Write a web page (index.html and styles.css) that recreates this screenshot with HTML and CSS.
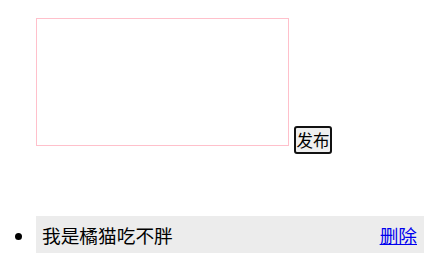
FILE: index.html
```html
<!DOCTYPE html>
<html lang="zh">
<head>
<meta charset="utf-8">
<link rel="stylesheet" href="styles.css">
</head>
<body>
<div class="publish">
  <textarea class="editor"></textarea>
  <button class="send">发布</button>
</div>
<ul class="list">
  <li class="item">
    <div class="row">
      <span class="text">我是橘猫吃不胖</span>
      <a class="del" href="#">删除</a>
    </div>
  </li>
</ul>
</body>
</html>
```
FILE: styles.css
```css
html, body {
  margin: 0;
  padding: 0;
  background: #fff;
}
body {
  font-family: "Liberation Sans", "Noto Sans CJK SC", sans-serif;
  color: #000;
}
.publish {
  display: flex;
  align-items: flex-end;
  gap: 5px;
  padding: 18px 0 0 36px;
}
.editor {
  box-sizing: border-box;
  width: 253px;
  height: 128px;
  margin: 0;
  padding: 2px;
  border: 1px solid pink;
  resize: none;
  outline: none;
}
.send {
  box-sizing: border-box;
  height: 28px;
  width: 38px;
  margin: 0 0 -8px 0;
  padding: 0;
  border: 2px solid #111;
  border-radius: 3px;
  background: #efefef;
  font-family: "Noto Sans CJK SC", sans-serif;
  font-size: 16.5px;
  color: #000;
  line-height: 22px;
}
.list {
  margin: 70px 6px 0 0;
  padding: 0 0 0 36px;
  list-style: disc outside;
  font-size: 18.7px;
}
.item {
  background: #ececec;
}
.item::marker {
  font-size: 24px;
}
.row {
  display: flex;
  justify-content: space-between;
  align-items: center;
  height: 37px;
  padding: 0 7px 0 6px;
  font-family: "Noto Sans CJK SC", sans-serif;
}
.del {
  color: #0000ee;
  text-decoration: underline;
}
```
